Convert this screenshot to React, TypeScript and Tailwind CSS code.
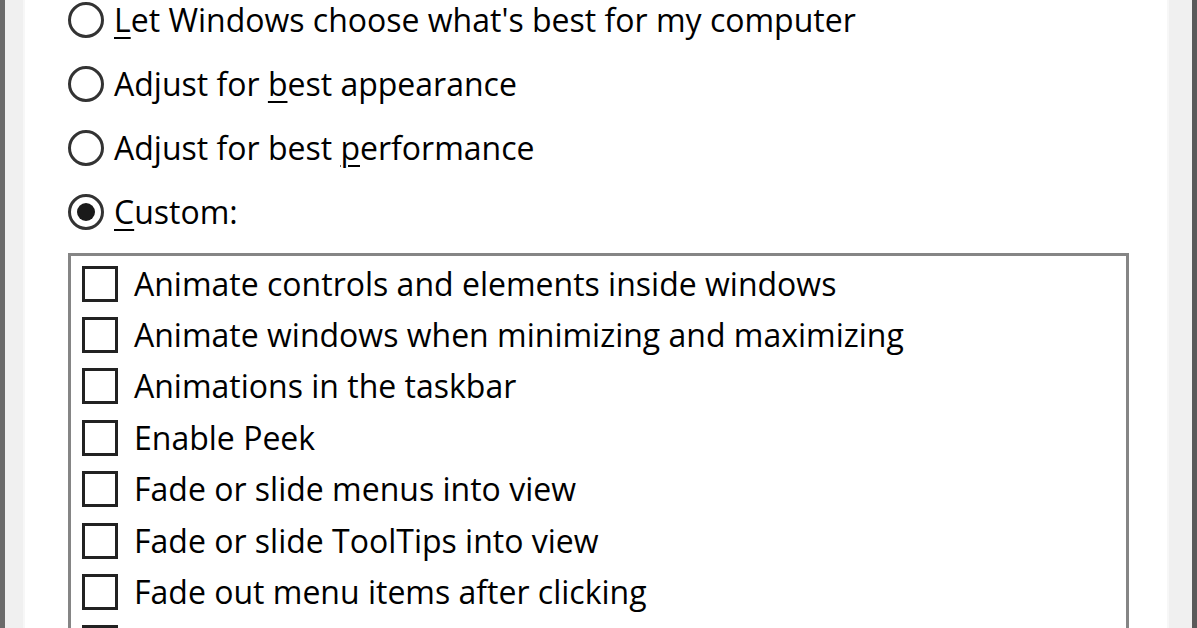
import React, { useState } from 'react';

const radios = [
  { pre: '', key: 'L', post: "et Windows choose what's best for my computer" },
  { pre: 'Adjust for ', key: 'b', post: 'est appearance' },
  { pre: 'Adjust for best ', key: 'p', post: 'erformance' },
  { pre: '', key: 'C', post: 'ustom:' },
];

const effects = [
  'Animate controls and elements inside windows',
  'Animate windows when minimizing and maximizing',
  'Animations in the taskbar',
  'Enable Peek',
  'Fade or slide menus into view',
  'Fade or slide ToolTips into view',
  'Fade out menu items after clicking',
  'Save taskbar thumbnail previews',
];

export default function App() {
  const [choice, setChoice] = useState(3);
  const [checked, setChecked] = useState<boolean[]>(effects.map(() => false));

  return (
    <div
      className="flex w-[1197px] h-[628px] overflow-hidden bg-white text-[#000]"
      style={{ fontFamily: '"Open Sans", "Noto Sans", sans-serif' }}
    >
      {/* window frame left */}
      <div className="w-[5px] bg-[#6b6b6b]" />
      <div className="w-[20px] bg-[#f0f0f0] border-r-2 border-[#f7f7f7]" />

      {/* tab page */}
      <div className="flex-1 flex flex-col pl-[43px] pr-[38px]">
        <div className="flex flex-col gap-[28px] pt-[2px]">
          {radios.map((r, i) => (
            <label
              key={i}
              className="flex items-center gap-[10px] h-[36px] cursor-default"
              onClick={() => setChoice(i)}
            >
              <span className="w-[36px] h-[36px] rounded-full border-[3px] border-[#333] bg-white flex items-center justify-center shrink-0">
                {choice === i && <span className="w-[18px] h-[18px] rounded-full bg-[#1a1a1a]" />}
              </span>
              <span className="text-[32px] leading-[36px]">
                {r.pre}
                <span className="underline underline-offset-[5px] decoration-2">{r.key}</span>
                {r.post}
              </span>
            </label>
          ))}
        </div>

        {/* visual effects list */}
        <div className="mt-[23px] border-[3px] border-b-0 border-[#858585] flex-1 pl-[11px] pt-[2px] flex flex-col">
          {effects.map((e, i) => (
            <label
              key={e}
              className="flex items-center gap-[16px] h-[51.4px] shrink-0 cursor-default"
              onClick={() =>
                setChecked((c) => c.map((v, j) => (j === i ? !v : v)))
              }
            >
              <span className="w-[36px] h-[36px] border-[3px] border-[#222] bg-white flex items-center justify-center shrink-0">
                {checked[i] && <span className="text-[26px] leading-none">✓</span>}
              </span>
              <span className="text-[32px] leading-none">{e}</span>
            </label>
          ))}
        </div>
      </div>

      {/* window frame right */}
      <div className="w-[25px] bg-[#f0f0f0] border-l-2 border-[#f7f7f7]" />
      <div className="w-[5px] bg-[#5a5a5a]" />
    </div>
  );
}
